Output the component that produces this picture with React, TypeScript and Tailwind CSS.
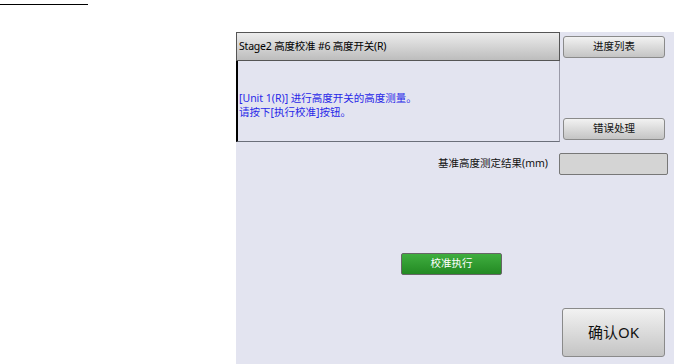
const font = { fontFamily: '"Noto Sans", "Noto Sans CJK SC", sans-serif' };

function GrayButton({ label, className = '' }: { label: string; className?: string }) {
  return (
    <button
      type="button"
      className={`flex items-center justify-center rounded-[3px] border border-[#8a8a8a] bg-gradient-to-b from-[#f2f2f2] to-[#c4c4c4] text-[#111] ${className}`}
    >
      {label}
    </button>
  );
}

export default function App() {
  return (
    <div className="relative h-[364px] w-[674px] overflow-hidden bg-white" style={font}>
      <div className="absolute left-0 top-[4px] h-[1px] w-[88px] bg-black" />
      <div className="flex pt-[32px] pl-[236px]">
        <div className="flex h-[332px] w-[438px] flex-col bg-[#e3e4f0]">
          {/* top: title + message, right side buttons */}
          <div className="flex">
            <div className="flex w-[324px] flex-col">
              <div className="flex h-[29px] items-center border border-[#555] bg-gradient-to-b from-[#ececec] to-[#bdbdbd] pl-[2px] text-[10.5px] tracking-[-0.2px] text-black">
                Stage2 高度校准 #6 高度开关(R)
              </div>
              <div className="flex h-[81px] flex-col justify-center border-b border-l-2 border-r border-b-[#6b6f7a] border-l-black border-r-[#9a9aa8] pt-[8px] pl-[1px] text-[10.5px] leading-[14px] text-[#2828e8]">
                <span>[Unit 1(R)] 进行高度开关的高度测量。</span>
                <span>请按下[执行校准]按钮。</span>
              </div>
            </div>
            <div className="flex flex-col pl-[3px] pt-[4px]">
              <GrayButton label="进度列表" className="h-[22px] w-[102px] text-[10.5px]" />
              <GrayButton label="错误处理" className="mt-[60px] h-[22px] w-[102px] text-[10.5px]" />
            </div>
          </div>
          {/* result row */}
          <div className="mt-[11px] flex items-center">
            <div className="w-[312px] text-right text-[10.5px] text-[#111]">基准高度测定结果(mm)</div>
            <div className="ml-[11px] h-[22px] w-[109px] rounded-[2px] border border-[#777] bg-[#d4d4d4]" />
          </div>
          {/* execute */}
          <div className="mt-[78px] pl-[165px]">
            <button
              type="button"
              className="flex h-[22px] w-[101px] items-center justify-center rounded-[2px] border border-[#666] bg-gradient-to-b from-[#3fae3f] to-[#238a23] text-[10.5px] text-white"
            >
              校准执行
            </button>
          </div>
          {/* confirm */}
          <div className="mt-[33px] pl-[326px]">
            <GrayButton label="确认OK" className="h-[49px] w-[103px] text-[15px]" />
          </div>
        </div>
      </div>
    </div>
  );
}
